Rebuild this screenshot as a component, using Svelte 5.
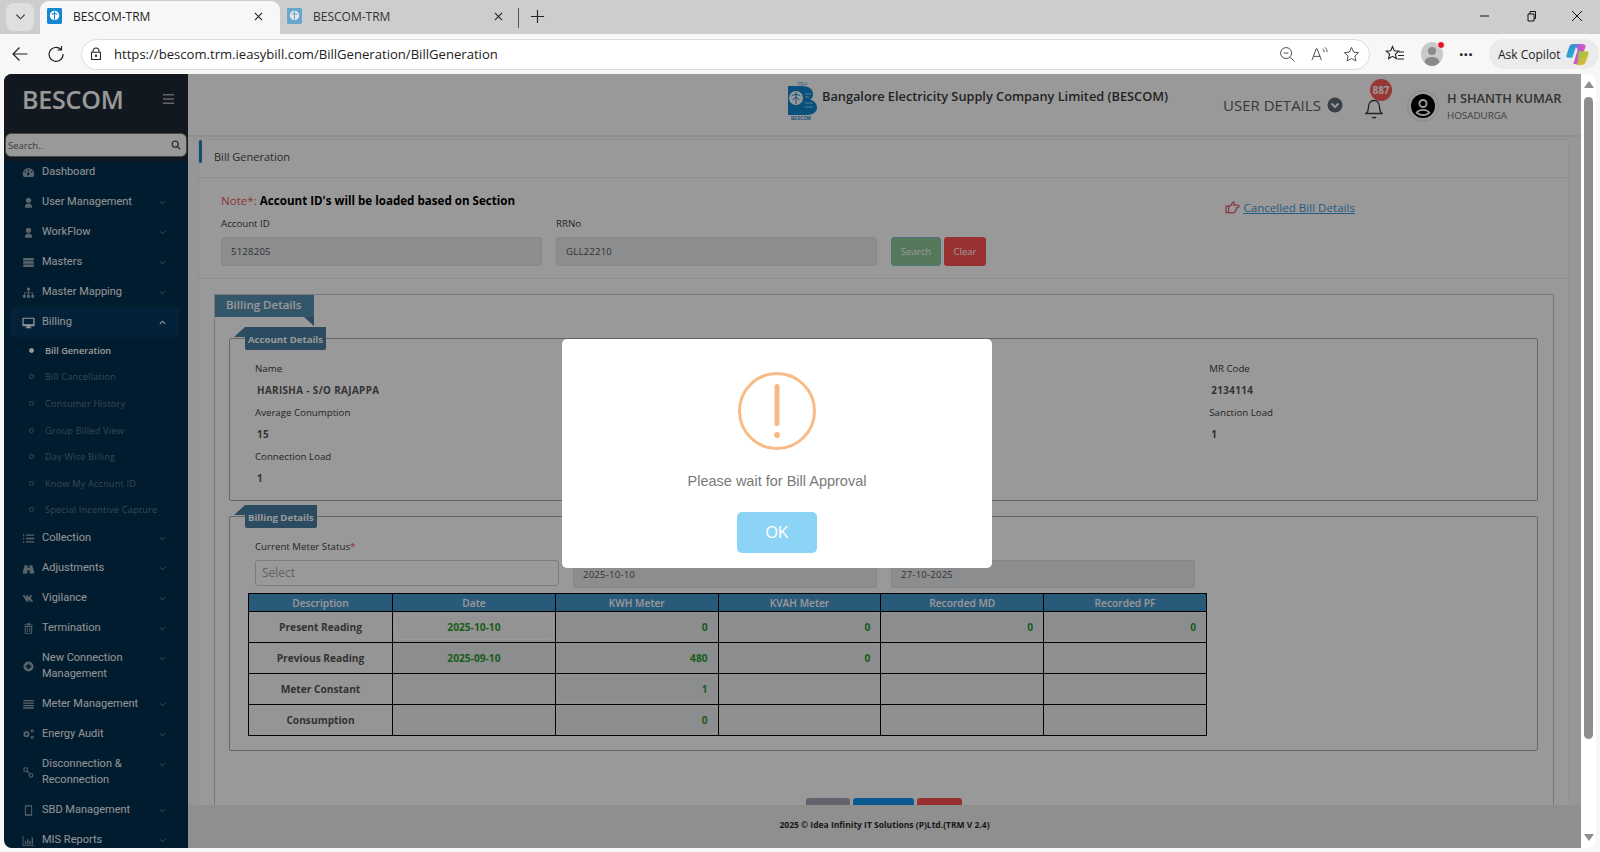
<script>
  const icons = {
    gauge: 'M8 2.5a7 7 0 0 0-7 7c0 1.5.4 2.8 1.2 4h11.6c.8-1.2 1.2-2.5 1.2-4a7 7 0 0 0-7-7zM8 4a1 1 0 1 1 0 2 1 1 0 0 1 0-2zM4 6a1 1 0 1 1 0 2 1 1 0 0 1 0-2zM12 6a1 1 0 1 1 0 2 1 1 0 0 1 0-2zM8.2 8.5a1.5 1.5 0 1 1-1.4 0L7 7h1z',
    user: 'M8 2a3 3 0 1 1 0 6.6A3 3 0 0 1 8 2zM3.5 14.5c0-3.4 1.5-5 3-5h3c1.5 0 3 1.6 3 5z',
    server: 'M1.5 2.5h13v3h-13zM1.5 6.5h13v3h-13zM1.5 10.5h13v3h-13z',
    sitemap: 'M6.2 2h3.6v3.4H6.2zM1 11h3.6v3.4H1zM6.2 11h3.6v3.4H6.2zM11.4 11H15v3.4h-3.6zM7.5 5.4h1v2.5h5v3.1h-1V8.9h-4V11h-1V8.9h-4V11h-1V7.9h5z',
    desktop: 'M1.5 2h13a1 1 0 0 1 1 1v8.5a1 1 0 0 1-1 1H9.8l.4 1.5H12v1H4v-1h1.8l.4-1.5H1.5a1 1 0 0 1-1-1V3a1 1 0 0 1 1-1zM2 3.5V10h12V3.5z',
    listol: 'M1.5 2.5h1.2v3H1.5zM1.5 7h1.2v2.5H1.5zM1.5 11h1.2v2.5H1.5zM5 3h10v1.6H5zM5 7.2h10v1.6H5zM5 11.4h10V13H5z',
    binoc: 'M1 12l2.4-8h3.4v3h2.4V4h3.4L15 12v2H9.4V10H6.6v4H1z',
    vk: 'M.5 4h3l2 3.500V4h2.500v3L10.500 4h2.500l-2.500 3.500L14 12H10.800L8 9v3H5.800z',
    trash: 'M6 1.5h4V3h3.5v1h-11V3H6zM3.5 5h9v9.5h-9zM4.7 6v7.5h6.6V6zM6 7h1v5.5H6zM9 7h1v5.5H9z',
    plus: 'M8 1.8a6.2 6.2 0 1 1 0 12.4A6.2 6.2 0 0 1 8 1.8zM6.9 4.6v2.3H4.6v2.2h2.3v2.3h2.2V9.1h2.3V6.9H9.1V4.6z',
    list: 'M1.5 2.5h13v1.6h-13zM1.5 5.5h13v1.6h-13zM1.5 8.5h13v1.6h-13zM1.5 11.5h13v1.6h-13z',
    cogs: 'M5.5 4a3.7 3.7 0 1 1 0 7.4 3.7 3.7 0 0 1 0-7.4zm0 2.2a1.5 1.5 0 1 0 0 3 1.5 1.5 0 0 0 0-3zM12.5 1.5a2 2 0 1 1 0 4 2 2 0 0 1 0-4zm0 1.2a.8.8 0 1 0 0 1.6.8.8 0 0 0 0-1.6zM12.5 9.5a2 2 0 1 1 0 4 2 2 0 0 1 0-4zm0 1.2a.8.8 0 1 0 0 1.6.8.8 0 0 0 0-1.6z',
    link: 'M4.5 1.5a3 3 0 1 1 0 6 3 3 0 0 1 0-6zm0 1.3a1.7 1.7 0 1 0 0 3.4 1.7 1.7 0 0 0 0-3.4zM11 8.5a3 3 0 1 1 0 6 3 3 0 0 1 0-6zm0 1.3a1.7 1.7 0 1 0 0 3.4 1.7 1.7 0 0 0 0-3.4zM6 7l1-1 3 3-1 1z',
    mobile: 'M4.5 1.5h7a1 1 0 0 1 1 1v11a1 1 0 0 1-1 1h-7a1 1 0 0 1-1-1v-11a1 1 0 0 1 1-1zM4.7 3v9.5h6.6V3z',
    chart: 'M.8 2h1v11.5h13.4v1H.8zM3.5 9h1.6v4H3.500zM6.300 6.500h1.600V13H6.300zM9.100 8.500h1.600V13H9.100zM11.900 4.500h1.600V13H11.900z'
  };
  const before = [
    { t: 'Dashboard', i: 'gauge', plain: true },
    { t: 'User Management', i: 'user' },
    { t: 'WorkFlow', i: 'user' },
    { t: 'Masters', i: 'server' },
    { t: 'Master Mapping', i: 'sitemap' }
  ];
  const subs = ['Bill Generation', 'Bill Cancellation', 'Consumer History', 'Group Billed View', 'Day Wise Billing', 'Know My Account ID', 'Special Incentive Capture'];
  const after = [
    { t: 'Collection', i: 'listol' },
    { t: 'Adjustments', i: 'binoc' },
    { t: 'Vigilance', i: 'vk' },
    { t: 'Termination', i: 'trash' },
    { t: 'New Connection Management', i: 'plus', wide: true },
    { t: 'Meter Management', i: 'list' },
    { t: 'Energy Audit', i: 'cogs' },
    { t: 'Disconnection & Reconnection', i: 'link', wide: true },
    { t: 'SBD Management', i: 'mobile' },
    { t: 'MIS Reports', i: 'chart' }
  ];
  const rows = [
    { d: 'Present Reading', date: '2025-10-10', light: true, kwh: '0', kvah: '0', md: '0', pf: '0', h: 'r31' },
    { d: 'Previous Reading', date: '2025-09-10', kwh: '480', kvah: '0', h: 'r30' },
    { d: 'Meter Constant', kwh: '1', h: 'r31' },
    { d: 'Consumption', kwh: '0', h: 'r31' }
  ];
</script>

{#snippet navItem(item)}
  <div class="item" class:wide={item.wide}>
    <svg class="ic" viewBox="0 0 16 16"><path fill-rule="evenodd" d={icons[item.i]} /></svg>
    <span class="lbl">{item.t}</span>
    {#if !item.plain}
      <svg class="chev" viewBox="0 0 8 5"><path d="M1 1l3 3 3-3" /></svg>
    {/if}
  </div>
{/snippet}

{#snippet favicon(cls)}
  <svg class={cls} viewBox="0 0 16 17">
    <rect x="0" y="0" width="16" height="17" rx="1.500" fill="#1589cf" />
    <circle cx="8" cy="8" r="5" fill="#fff" />
    <path d="M8 3.500v9M5 7c2-1.500 4-1.500 6 0" stroke="#1589cf" stroke-width="1.200" fill="none" />
  </svg>
{/snippet}

<div class="app">
  <div class="tabs">
    <div class="tabmenu"><svg viewBox="0 0 12 8" class="tabchev"><path d="M1.500 1.500L6 6l4.500-4.500" /></svg></div>
    <div class="tab active">
      {@render favicon('fav')}
      <span class="tabtitle">BESCOM-TRM</span>
      <svg class="tabx" viewBox="0 0 10 10"><path d="M1 1l8 8M9 1l-8 8" /></svg>
    </div>
    <div class="tab">
      {@render favicon('fav faded')}
      <span class="tabtitle dim">BESCOM-TRM</span>
      <svg class="tabx" viewBox="0 0 10 10"><path d="M1 1l8 8M9 1l-8 8" /></svg>
    </div>
    <div class="tabsep"></div>
    <svg class="newtab" viewBox="0 0 16 16"><path d="M8 1v14M1 8h14" /></svg>
    <div class="winctl">
      <svg viewBox="0 0 12 12"><path d="M1 6h9" /></svg>
      <svg viewBox="0 0 12 12"><path d="M3 4h6v7H3zM5 4V1.500h5.500V8.500H9" /></svg>
      <svg viewBox="0 0 12 12"><path d="M1 1l10 10M11 1L1 11" /></svg>
    </div>
  </div>

  <div class="toolbar">
    <svg class="tool back" viewBox="0 0 18 18"><path d="M16.500 9H2M8.500 2.500L2 9l6.500 6.500" /></svg>
    <svg class="tool reload" viewBox="0 0 18 18"><path d="M14 4.500A7 7 0 1 0 16 9M14.500 1v4h-4" /></svg>
    <div class="urlbar">
      <svg class="lock" viewBox="0 0 14 16"><path d="M3.500 6V4.500a3.500 3.500 0 0 1 7 0V6M1.800 6h10.400v8.500H1.800z" /><circle cx="7" cy="10" r=".8" /></svg>
      <span class="url">https://bescom.trm.ieasybill.com/BillGeneration/BillGeneration</span>
      <svg class="ub" viewBox="0 0 18 18"><circle cx="7.500" cy="7.500" r="5.800" /><path d="M5 7.500h5M12 12l4.500 4.500" /></svg>
      <svg class="ub" viewBox="0 0 18 18"><path d="M1 15L5.500 3h1L11 15M3 11h6.500M12.500 3c1 1 1.500 2.200 1.500 3.500M15 1.500c1.300 1.400 2 3 2 5" /></svg>
      <svg class="ub" viewBox="0 0 18 18"><path d="M9 1.500l2.300 5 5.200.6-3.900 3.500 1.100 5.300L9 13.200l-4.700 2.700 1.100-5.300L1.500 7.100l5.200-.6z" /></svg>
    </div>
    <svg class="tool fav2" viewBox="0 0 20 18"><path d="M7.500 1.500l1.800 4.300 4.500.4-3.400 3 1 4.500-3.900-2.400-3.900 2.400 1-4.500-3.400-3 4.500-.4zM14 7h5M13 10.500h6M12.500 14h6.500" /></svg>
    <div class="prof">
      <svg viewBox="0 0 22 24"><ellipse cx="11" cy="12" rx="11" ry="12" fill="#c9c9c9" /><circle cx="11" cy="9" r="4" fill="#8a8a8a" /><path d="M3.500 20c1-4 4-5 7.500-5s6.500 1 7.500 5c-2 2.500-4.500 4-7.500 4s-5.500-1.500-7.500-4z" fill="#8a8a8a" /></svg>
      <span class="dot"></span>
    </div>
    <span class="more">···</span>
    <div class="copilot">
      <span>Ask Copilot</span>
      <svg viewBox="0 0 22 22" class="cop">
        <defs>
          <linearGradient id="c1" x1="0" y1="0" x2="1" y2="1"><stop offset="0" stop-color="#2a7fe0" /><stop offset="1" stop-color="#32c9c0" /></linearGradient>
          <linearGradient id="c2" x1="0" y1="0" x2="1" y2="1"><stop offset="0" stop-color="#7fc94f" /><stop offset="1" stop-color="#f5b52e" /></linearGradient>
          <linearGradient id="c3" x1="0" y1="0" x2="1" y2="1"><stop offset="0" stop-color="#a45cf0" /><stop offset="1" stop-color="#f0569b" /></linearGradient>
        </defs>
        <path d="M7 1h8c3 0 4 1 3.500 3L14 17c-1 2-2 3-4 3H7l4-13c.5-2-1-3-4-3z" fill="url(#c3)" />
        <path d="M7 1h6c-2 0-3 1-3.500 3L6 14H2C.5 14 0 13 .5 11.500L3 4C3.700 2 5 1 7 1z" fill="url(#c1)" />
        <path d="M12 8h8c1.500 0 2 1 1.500 2.500L19 18c-.7 2-2 3-4 3H8c2 0 3-1 3.500-3z" fill="url(#c2)" />
      </svg>
    </div>
  </div>

  <div class="page">
    <aside class="side">
      <div class="top">
        <div class="brand">
          <span class="bname">BESCOM</span>
          <svg class="burger" viewBox="0 0 10 9"><path d="M0 .7h10M0 4.500h10M0 8.300h10" /></svg>
        </div>
        <div class="search">
          <span>Search..</span>
          <svg viewBox="0 0 12 12"><circle cx="5" cy="5" r="3.600" /><path d="M7.700 7.700L11 11" /></svg>
        </div>
      </div>
      <nav class="nav">
        {#each before as item}{@render navItem(item)}{/each}
        <div class="item open">
          <svg class="ic bright" viewBox="0 0 16 16"><path fill-rule="evenodd" d={icons.desktop} /></svg>
          <span class="lbl">Billing</span>
          <svg class="chev up" viewBox="0 0 8 5"><path d="M1 4l3-3 3 3" /></svg>
        </div>
        <div class="subs">
          {#each subs as s, i}
            <div class="sub" class:cur={i === 0}><span class="bul"></span><span>{s}</span></div>
          {/each}
        </div>
        {#each after as item}{@render navItem(item)}{/each}
      </nav>
    </aside>

    <div class="main">
      <header class="head">
        <svg class="logo" viewBox="0 0 30 39">
          <text x="14" y="3.500" class="lt">ಬೆಸ್ಕಾಂ</text>
          <path fill-rule="evenodd" d="M0 5h14c7 0 11 3.500 11 8 0 3-1.200 4.500-3 5.500 3.500 1 7 3.500 7 8 0 5-4.500 7.500-11 7.500H0zM8 10a7 7 0 1 0 0 14 7 7 0 0 0 0-14z" fill="#0f86d0" />
          <path d="M8 11v12M3.500 15c3-2 6-2 9 0M4.500 19L8 16l3.500 3" stroke="#0f86d0" stroke-width="1" fill="none" />
          <path d="M17 13h6M17 16h4M17 22h8M17 26h8" stroke="#fff" stroke-width=".6" fill="none" />
          <text x="13" y="38.500" class="lb">BESCOM</text>
        </svg>
        <span class="org">Bangalore Electricity Supply Company Limited (BESCOM)</span>
        <span class="ud">USER DETAILS</span>
        <svg class="udc" viewBox="0 0 16 16"><circle cx="8" cy="8" r="7.500" fill="#5e6a78" /><path d="M4.500 6.500L8 10l3.500-3.500" fill="none" stroke="#fff" stroke-width="2" /></svg>
        <div class="bell">
          <svg viewBox="0 0 18 24"><path d="M1 17.500h16c-2-1.500-2.500-3-2.500-6.500 0-3.500-2-6.500-5.500-6.500S3.500 7.500 3.500 11c0 3.500-.5 5-2.500 6.500zM7 21c1 1 3 1 4 0" /></svg>
          <span class="badge">887</span>
        </div>
        <div class="avatar">
          <svg viewBox="0 0 24 24"><circle cx="12" cy="12" r="12" fill="#000" /><circle cx="12" cy="9.500" r="4.500" fill="#fff" /><circle cx="12" cy="9.500" r="2.600" fill="#000" /><path d="M4.500 19c1.500-3 4.500-4 7.500-4s6 1 7.500 4c-2 2-4.500 3-7.500 3s-5.500-1-7.500-3z" fill="#fff" /><path d="M7 18.500c1-1 3-1.700 5-1.700s4 .7 5 1.700c-1.500 1-3 1.500-5 1.500s-3.500-.5-5-1.500z" fill="#000" /></svg>
        </div>
        <div class="who">
          <div class="wname">H SHANTH KUMAR</div>
          <div class="wsec">HOSADURGA</div>
        </div>
      </header>

      <div class="scroll">
        <div class="card">
          <div class="cardhead">Bill Generation</div>
          <section class="find">
            <div class="findl">
              <div class="note"><span class="red">Note*:</span> <b>Account ID's will be loaded based on Section</b></div>
              <div class="findrow">
                <div class="f">
                  <span class="flabel">Account ID</span>
                  <div class="inp">5128205</div>
                </div>
                <div class="f">
                  <span class="flabel">RRNo</span>
                  <div class="inp">GLL22210</div>
                </div>
                <button class="btn green">Search</button>
                <button class="btn red2">Clear</button>
              </div>
            </div>
            <a class="cancel" href="#top">
              <svg viewBox="0 0 16 14"><path d="M1 5.500h2.800v7H1zM3.800 6c2-.4 3.500-2.500 4.500-4.500.5-1 2-.4 1.700 1L9.300 4.500h4.700c1.500 0 1.500 2.500 0 2.500h-1.500c.6 1 0 2-.8 2.200.2 1-.3 1.800-1 2 0 1-.7 1.500-1.700 1.500H6c-1 0-1.500-.6-2.200-.6" /></svg>
              <span>Cancelled Bill Details</span>
            </a>
          </section>

          <div class="outer">
            <div class="lg1">Billing Details</div>
            <div class="inner">
              <div class="lg2">Account Details</div>
              <div class="acct">
                <div class="cell"><span class="flabel">Name</span><span class="val">HARISHA - S/O RAJAPPA</span></div>
                <div class="cell"></div><div class="cell"></div>
                <div class="cell"><span class="flabel">MR Code</span><span class="val">2134114</span></div>
                <div class="cell"><span class="flabel">Average Conumption</span><span class="val">15</span></div>
                <div class="cell"></div><div class="cell"></div>
                <div class="cell"><span class="flabel">Sanction Load</span><span class="val">1</span></div>
                <div class="cell"><span class="flabel">Connection Load</span><span class="val">1</span></div>
              </div>
            </div>
            <div class="inner second">
              <div class="lg2">Billing Details</div>
              <div class="meter">
                <div class="mf">
                  <span class="flabel">Current Meter Status<span class="req">*</span></span>
                  <div class="sel">Select</div>
                </div>
                <div class="mf">
                  <span class="flabel">&nbsp;</span>
                  <div class="inp tall">2025-10-10</div>
                </div>
                <div class="mf">
                  <span class="flabel">&nbsp;</span>
                  <div class="inp tall">27-10-2025</div>
                </div>
              </div>
              <table class="tbl">
                <colgroup>
                  <col class="c1" /><col class="c2" /><col class="c2" /><col class="c2" /><col class="c2" /><col class="c2" />
                </colgroup>
                <thead>
                  <tr><th>Description</th><th>Date</th><th>KWH Meter</th><th>KVAH Meter</th><th>Recorded MD</th><th>Recorded PF</th></tr>
                </thead>
                <tbody>
                  {#each rows as r}
                    <tr class={r.h}>
                      <td class="dsc">{r.d}</td>
                      <td class="io">{#if r.date}<div class="ci mid" class:light={r.light}>{r.date}</div>{/if}</td>
                      {#each [r.kwh, r.kvah, r.md, r.pf] as v}
                        <td class="io">{#if v}<div class="ci">{v}</div>{/if}</td>
                      {/each}
                    </tr>
                  {/each}
                </tbody>
              </table>
            </div>
            <div class="actions">
              <span class="ab gray"></span>
              <span class="ab blue"></span>
              <span class="ab redb"></span>
            </div>
          </div>
        </div>
      </div>

      <footer class="foot">2025 © Idea Infinity IT Solutions (P)Ltd.(TRM V 2.4)</footer>
    </div>

    <div class="sbar">
      <span class="aup"></span>
      <span class="thumb"></span>
      <span class="adn"></span>
    </div>

    <div class="veil"></div>
    <div class="modal">
      <svg class="warn" viewBox="0 0 78 78">
        <circle cx="39" cy="39" r="37.500" fill="none" stroke="#f8bb86" stroke-width="3" />
        <rect x="36.500" y="12" width="5" height="42" rx="2.500" fill="#f5b985" />
        <circle cx="39" cy="63" r="3" fill="#f5b985" />
      </svg>
      <p class="msg">Please wait for Bill Approval</p>
      <button class="ok">OK</button>
    </div>
  </div>
</div>

<style>
  :global(body) { margin: 0; background: #f7f7f7; }
  .app { width: 1600px; height: 852px; overflow: hidden; display: flex; flex-direction: column; font-family: "Open Sans", "Liberation Sans", sans-serif; }
  button { font-family: inherit; border: 0; padding: 0; }

  .tabs { height: 34px; flex: none; background: #cdcdcd; display: flex; align-items: flex-end; }
  .tabmenu { width: 28px; height: 28px; margin: 0 6px 3px 6px; border-radius: 8px; background: #dfdfdf; display: flex; align-items: center; justify-content: center; }
  .tabchev { width: 11px; height: 8px; fill: none; stroke: #333; stroke-width: 1.2; }
  .tab { width: 240px; height: 33px; display: flex; align-items: center; padding: 0 0 3px 7px; box-sizing: border-box; }
  .tab.active { background: #f7f7f7; border-radius: 9px 9px 0 0; }
  .fav { width: 15px; height: 16px; flex: none; margin-right: 11px; }
  .faded { opacity: .55; }
  .tabtitle { font-size: 12px; color: #1d1d1d; width: 176px; flex: none; white-space: nowrap; }
  .dim { color: #333; }
  .tabx { width: 9px; height: 9px; fill: none; stroke: #222; stroke-width: 1.2; margin-left: 5px; }
  .tabsep { width: 1px; height: 20px; background: #555; margin: 0 11px 6px -2px; }
  .newtab { width: 15px; height: 15px; fill: none; stroke: #222; stroke-width: 1.2; margin-bottom: 10px; }
  .winctl { margin-left: auto; display: flex; gap: 34px; padding: 0 17px 3px 0; align-self: center; }
  .winctl svg { width: 12px; height: 12px; fill: none; stroke: #111; stroke-width: 1; }

  .toolbar { height: 40px; flex: none; background: #f7f7f7; display: flex; align-items: center; }
  .tool { fill: none; stroke: #222; stroke-width: 1.2; flex: none; }
  .back { width: 18px; height: 18px; margin-left: 11px; }
  .reload { width: 18px; height: 18px; margin-left: 18px; }
  .urlbar { width: 1289px; height: 31px; box-sizing: border-box; margin-left: 16px; flex: none; border: 1.5px solid #dcdcdc; border-radius: 16px; background: #fff; display: flex; align-items: center; padding: 0 9px 0 8px; }
  .lock { width: 12px; height: 14px; fill: none; stroke: #222; stroke-width: 1.2; flex: none; }
  .url { font-size: 13.1px; color: #222; margin-left: 12px; flex: 1; white-space: nowrap; font-family: "Open Sans", sans-serif; }
  .ub { width: 17px; height: 17px; fill: none; stroke: #444; stroke-width: 1; margin-left: 15px; flex: none; }
  .fav2 { width: 20px; height: 18px; margin-left: 15px; stroke-width: 1.1; }
  .prof { position: relative; width: 22px; height: 24px; margin-left: 16px; flex: none; }
  .prof svg { width: 22px; height: 24px; display: block; }
  .dot { position: absolute; right: -2px; top: -1px; width: 6px; height: 6px; border-radius: 50%; background: #e81123; border: 1px solid #f7f7f7; }
  .more { font-size: 16px; font-weight: 700; color: #222; margin-left: 16px; width: 22px; }
  .copilot { width: 110px; height: 30px; margin-left: 8px; flex: none; border-radius: 15px; background: #ebebeb; display: flex; align-items: center; padding-left: 9px; box-sizing: border-box; gap: 6px; }
  .copilot span { font-size: 12px; color: #222; white-space: nowrap; }
  .cop { width: 23px; height: 23px; flex: none; }

  .page { position: relative; height: 774px; margin: 0 4px; display: flex; border-radius: 8px; overflow: hidden; background: #fff; flex: none; }

  .side { width: 184px; flex: none; background: #032f4e; }
  .top { background: #1e2834; height: 87px; }
  .brand { height: 59px; display: flex; align-items: center; padding: 0 0 10px 18px; box-sizing: border-box; }
  .bname { font-size: 25px; font-weight: 600; color: #fff; letter-spacing: -.2px; }
  .burger { width: 11px; height: 10px; margin-left: 39px; stroke: #a9a9a9; stroke-width: 1.300; fill: none; }
  .search { height: 24px; width: 182px; margin-left: 1px; box-sizing: border-box; background: #fff; border-radius: 6px; border: 1px solid #777; display: flex; align-items: center; justify-content: space-between; padding: 0 5px 0 2px; }
  .search span { font-size: 9.5px; color: #666; }
  .search svg { width: 10px; height: 10px; fill: none; stroke: #555; stroke-width: 1.6; }

  .nav { margin-top: -4px; font-family: Roboto, "Open Sans", sans-serif; }
  .item { height: 30px; display: flex; align-items: center; padding-left: 18px; color: #f3f5f7; position: relative; box-sizing: border-box; }
  .ic { width: 13px; height: 13px; fill: #96a7b2; flex: none; margin-right: 7px; }
  .bright { fill: #fff; }
  .lbl { font-size: 11px; line-height: 16px; width: 112px; }
  .chev { width: 7px; height: 5px; fill: none; stroke: #7c8d99; stroke-width: 1; margin-left: 5px; }
  .chev.up { stroke: #fff; stroke-width: 1.300; }
  .wide { height: 46px; }
  .wide .chev { align-self: flex-start; margin-top: 13px; }
  .open { background: #053a60; width: 168px; margin-left: 7px; padding-left: 11px; border-radius: 3px; height: 30px; }
  .subs { font-family: "Open Sans", sans-serif; }
  .sub { height: 26.6px; display: flex; align-items: center; padding-left: 25px; gap: 11px; font-size: 9.2px; letter-spacing: .18px; color: #5d7789; white-space: nowrap; }
  .sub.cur { color: #fff; font-weight: 600; letter-spacing: 0; }
  .bul { width: 3px; height: 3px; border: 1px solid #5d7789; border-radius: 50%; flex: none; }
  .cur .bul { background: #fff; border-color: #fff; }

  .main { width: 1393px; flex: none; display: flex; flex-direction: column; background: #fcfcfc; }
  .head { height: 63px; flex: none; box-sizing: border-box; border-bottom: 2px solid #f0f0f0; display: flex; align-items: flex-start; padding-left: 600px; background: #fff; position: relative; }
  .logo { width: 30px; height: 39px; margin-top: 7px; flex: none; overflow: visible; }
  .lt { font-size: 5px; fill: #0f86d0; text-anchor: middle; font-family: "Noto Sans", sans-serif; }
  .lb { font-size: 4.500px; fill: #0f86d0; font-weight: 700; text-anchor: middle; font-family: "Liberation Sans", sans-serif; }
  .org { margin: 13px 0 0 4px; font-size: 12.75px; line-height: 18px; font-weight: 600; color: #3a3a3a; white-space: nowrap; width: 401px; flex: none; }
  .ud { margin-top: 21px; font-size: 15px; line-height: 20px; color: #616161; white-space: nowrap; width: 104px; flex: none; }
  .udc { width: 16px; height: 16px; margin-top: 23px; flex: none; }
  .bell { position: relative; width: 18px; height: 24px; margin: 22px 0 0 22px; flex: none; }
  .bell svg { width: 18px; height: 24px; fill: none; stroke: #3d3d3d; stroke-width: 1.300; display: block; }
  .badge { position: absolute; left: 5px; top: -17px; width: 22px; height: 22px; border-radius: 50%; background: #ff5a5a; color: #fff; font-size: 10px; font-weight: 700; display: flex; align-items: center; justify-content: center; }
  .avatar { width: 32px; height: 32px; margin: 16px 0 0 24px; border-radius: 50%; border: 1px solid #e6e6e6; box-sizing: border-box; display: flex; align-items: center; justify-content: center; flex: none; }
  .avatar svg { width: 24px; height: 24px; }
  .who { margin: 15px 0 0 8px; white-space: nowrap; }
  .wname { font-size: 12.8px; line-height: 18px; font-weight: 600; color: #555; }
  .wsec { font-size: 9.8px; line-height: 14px; margin-top: 2px; color: #6e6e6e; font-weight: 400; }

  .scroll { flex: 1; min-height: 0; overflow: hidden; padding: 2px 12px 0 10px; }
  .card { border: 1px solid #f2f2f2; background: #fff; }
  .cardhead { height: 38px; display: flex; align-items: center; padding: 0 0 5px 15px; box-sizing: border-box; font-size: 11px; font-weight: 500; color: #4a4a4a; border-bottom: 1px solid #f0f0f0; position: relative; }
  .cardhead::before { content: ""; position: absolute; left: 0; top: 0; width: 3px; height: 23px; background: #1d80c2; border-radius: 2px; }
  .find { height: 101px; border-bottom: 1px solid #f0f0f0; display: flex; justify-content: space-between; padding: 13px 213px 0 22px; box-sizing: border-box; }
  .note { font-size: 11.6px; line-height: 19px; }
  .red { color: #e85a5a; }
  .note b { color: #000; font-weight: 700; }
  .findrow { display: flex; align-items: flex-end; margin-top: 7px; gap: 14px; }
  .f { display: flex; flex-direction: column; width: 321px; }
  .flabel { font-size: 9.7px; line-height: 14px; color: #3c3c3c; }
  .inp { box-sizing: border-box; height: 29px; margin-top: 6px; background: #e9ecef; border: 1px solid #dfe0e0; border-radius: 3px; display: flex; align-items: center; padding-left: 9px; font-size: 9.600px; color: #555; letter-spacing: .2px; }
  .tall { height: 28px; margin-top: 6px; padding-left: 9px; }
  .btn { height: 29px; border-radius: 3px; color: #fff; font-size: 9.500px; }
  .green { width: 50px; background: #8fc997; border: 1px solid #7cc3cf; }
  .red2 { width: 42px; background: #ff5252; margin-left: -11px; }
  .cancel { display: flex; align-items: center; gap: 3px; height: 16px; margin-top: 8px; font-size: 11.6px; color: #3f9ad8; }
  .cancel span { text-decoration: underline; }
  .cancel svg { width: 15px; height: 13px; fill: none; stroke: #e45a6e; stroke-width: 1.300; }

  .outer { margin: 15px 14px 0 15px; border: 1px solid #c8c8c8; }
  .lg1 { width: 99px; height: 22px; background: #588fb2; color: #fff; font-size: 11.5px; font-weight: 600; display: flex; align-items: center; padding: 0 0 3px 11px; box-sizing: border-box; position: relative; }
  .lg1::after { content: ""; position: absolute; right: 0; top: 22px; border-top: 9px solid #487da0; border-left: 10px solid transparent; }
  .inner { margin: 21px 15px 0 14px; border: 1px solid #aaa; border-radius: 2px; padding-bottom: 6px; }
  .second { margin-top: 15px; padding-bottom: 14px; }
  .lg2 { width: fit-content; height: 23px; margin: -12px 0 0 15px; padding: 1px 3px 0; box-sizing: border-box; background: #487da0; border-radius: 0 0 2px 2px; color: #fff; font-size: 9.6px; font-weight: 700; display: flex; align-items: center; position: relative; }
  .lg2::before { content: ""; position: absolute; left: -11px; top: 0; border-bottom: 10px solid #487da0; border-left: 11px solid transparent; }
  .acct { display: grid; grid-template-columns: repeat(4, 318.1px); margin: 12px 0 0 25px; }
  .cell { display: flex; flex-direction: column; height: 44px; }
  .val { font-size: 9.800px; line-height: 14px; font-weight: 700; color: #555; margin: 8px 0 0 2px; letter-spacing: .4px; }
  .req { color: #ff3c3c; }
  .meter { display: grid; grid-template-columns: repeat(3, 304px); gap: 14px; margin: 12px 0 0 25px; align-items: start; }
  .mf { display: flex; flex-direction: column; }
  .sel { box-sizing: border-box; height: 26px; margin-top: 6px; background: #fff; border: 1.500px solid #cfcfcf; border-radius: 3px; padding-left: 6px; font-size: 12px; line-height: 23px; color: #a5a5a5; }
  .tbl { border-collapse: collapse; table-layout: fixed; width: 958px; margin: 5px 0 0 18px; font-size: 10.200px; font-weight: 700; color: #555; }
  .c1 { width: 144px; }
  .c2 { width: 162.800px; }
  .tbl th { height: 18px; padding: 0; box-sizing: border-box; background: #4696cb; color: #fff; border: 1px solid #000; font-weight: 600; }
  .tbl td { border: 1px solid #000; padding: 1px; background: #f0f0f0; box-sizing: border-box; }
  .r31 { height: 31px; }
  .r30 { height: 30px; }
  .dsc { text-align: center; background: #f8f8f8 !important; }
  .ci { height: 26px; border-radius: 3px; background: #e9ecef; padding-right: 9px; display: flex; align-items: center; justify-content: flex-end; color: #2a9a2a; margin: 1px 0; }
  .mid { justify-content: center; padding-right: 0; }
  .light { background: #f6f6f6; border: 1px solid #ffffff; box-sizing: border-box; }
  .actions { display: flex; justify-content: center; gap: 3px; margin-top: 47px; height: 30px; }
  .ab { height: 30px; border-radius: 3px; }
  .gray { width: 44px; background: #a3a3b4; }
  .blue { width: 61px; background: #1096f0; }
  .redb { width: 45px; background: #ff5050; }

  .foot { height: 43px; flex: none; box-sizing: border-box; padding-bottom: 4px; background: #efefef; display: flex; align-items: center; justify-content: center; font-size: 8.5px; font-weight: 700; color: #2a2a2a; position: relative; }

  .sbar { width: 15px; flex: none; background: #fff; display: flex; flex-direction: column; align-items: center; padding: 7px 0; box-sizing: border-box; }
  .aup { width: 0; height: 0; border: 5px solid transparent; border-top: 0; border-bottom: 7px solid #8e8e8e; }
  .thumb { width: 9px; height: 642px; margin-top: 9px; background: #8e8e8e; border-radius: 5px; }
  .adn { width: 0; height: 0; margin-top: auto; border: 5px solid transparent; border-bottom: 0; border-top: 7px solid #8e8e8e; }

  .veil { position: absolute; left: 0; top: 0; width: 1577px; height: 100%; background: rgba(0, 0, 0, .4); }
  .modal { position: absolute; left: 558px; top: 265px; width: 430px; height: 229px; background: #fff; border-radius: 5px; display: flex; flex-direction: column; align-items: center; font-family: "Liberation Sans", Arial, sans-serif; }
  .warn { width: 78px; height: 78px; margin-top: 33px; flex: none; }
  .msg { margin: 22px 0 0; font-size: 14.500px; line-height: 18px; color: #797979; }
  .ok { width: 80px; height: 41px; margin-top: 22px; background: #8cd4f5; color: #fff; border-radius: 5px; font-size: 16px; font-family: inherit; }
</style>
